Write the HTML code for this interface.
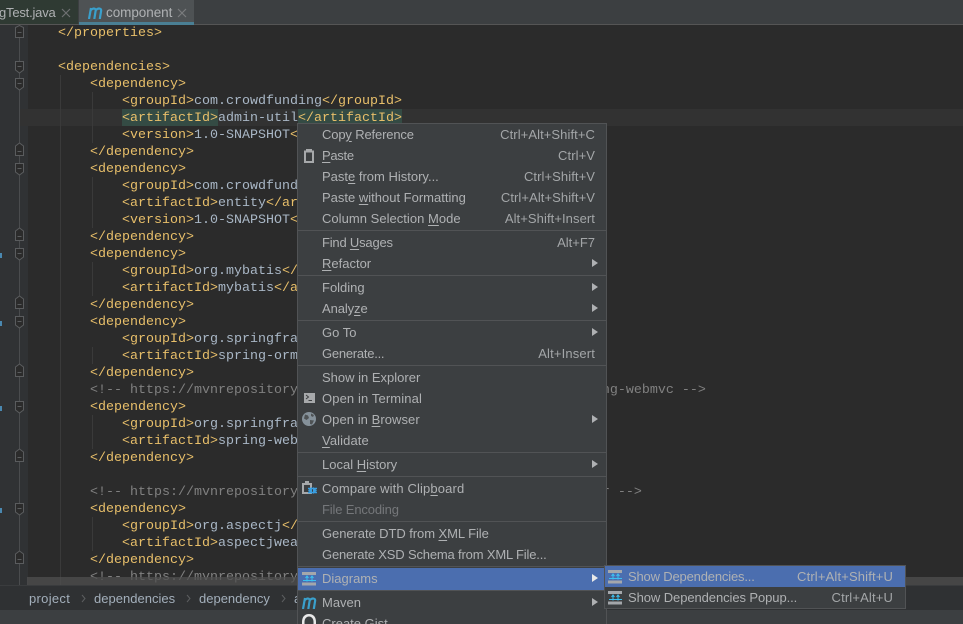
<!DOCTYPE html>
<html><head><meta charset="utf-8"><style>
html,body{margin:0;padding:0;width:963px;height:624px;overflow:hidden;background:#2b2b2b}
#r{position:relative;width:963px;height:624px;overflow:hidden;font-family:"Liberation Sans",sans-serif}
#r div,#r svg{position:absolute}
.c{font:13.33px/17px "Liberation Mono",monospace;color:#a9b7c6;white-space:pre;height:17px;margin-top:1px}
.c b{font-weight:normal;color:#e8bf6a}
.c i{font-style:normal;color:#808080}
.m{left:322px;height:21px;line-height:21px;font-size:13px;color:#afb1b3;white-space:pre}
.m u{text-underline-offset:2px}
.s{right:368px;height:21px;line-height:21px;font-size:13px;letter-spacing:.08px;color:#a3a6a8;white-space:pre}
.l{left:298px;width:309px;height:1px;background:#515355}
.a{left:592px;width:0;height:0;border-left:6px solid #afb1b3;border-top:4px solid transparent;border-bottom:4px solid transparent}
.g{left:92px;width:1px;background:#3a3a3a}
.b{top:586px;height:24px;line-height:25px;font-size:13px;color:#a3afbb}
</style></head><body><div id="r">
<div style="left:0;top:0;width:963px;height:24px;background:#3c3f41"></div>
<div style="left:0;top:24px;width:963px;height:1px;background:#555"></div>
<div style="left:0;top:0;width:78px;height:24px;background:#2f3a33"></div>
<div style="left:0;top:0;width:60px;height:24px;line-height:26px;font-size:13px;letter-spacing:-.2px;color:#afb1b3;white-space:pre;text-indent:-1px">gTest.java</div>
<svg style="left:60px;top:7px" width="12" height="12"><path d="M2 2L10 10M10 2L2 10" stroke="#6e7072" stroke-width="1.2"/></svg>
<div style="left:79px;top:0;width:115px;height:22px;background:#4e5254"></div>
<div style="left:79px;top:22px;width:115px;height:3px;background:#4a7f94"></div>
<svg style="left:88px;top:7px" width="15" height="12" fill="none" stroke="#3aa0cc" stroke-width="2.2"><path d="M1 12L3 1M3 3C5 1 8 .8 7.6 4L6.3 12M8 3C10 1 13.6 .8 13.1 4L11.8 12"/></svg>
<div style="left:106px;top:0;height:24px;line-height:26px;font-size:13.5px;letter-spacing:-.05px;color:#afb1b3">component</div>
<svg style="left:176px;top:7px" width="12" height="12"><path d="M2 2L10 10M10 2L2 10" stroke="#7a7c7e" stroke-width="1.2"/></svg>

<div style="left:0;top:25px;width:28px;height:561px;background:#303234"></div>
<div style="left:19px;top:25px;width:1px;height:561px;background:#4a4c4e"></div>
<div style="left:20px;top:109px;width:943px;height:17px;background:#323232"></div>
<div style="left:122px;top:109px;width:96px;height:17px;background:#344b44"></div>
<div style="left:298px;top:109px;width:104px;height:17px;background:#344b44"></div>
<div class="g" style="left:60px;top:75px;height:510px"></div>
<div class="g" style="top:92px;height:51px"></div>
<div class="g" style="top:177px;height:51px"></div>
<div class="g" style="top:262px;height:34px"></div>
<div class="g" style="top:347px;height:17px"></div>
<div class="g" style="top:415px;height:34px"></div>
<div class="g" style="top:517px;height:34px"></div>

<div class="c" style="left:58px;top:24px"><b>&lt;/properties&gt;</b></div>
<div class="c" style="left:58px;top:58px"><b>&lt;dependencies&gt;</b></div>
<div class="c" style="left:90px;top:75px"><b>&lt;dependency&gt;</b></div>
<div class="c" style="left:122px;top:92px"><b>&lt;groupId&gt;</b>com.crowdfunding<b>&lt;/groupId&gt;</b></div>
<div class="c" style="left:122px;top:109px"><b>&lt;artifactId&gt;</b>admin-util<b>&lt;/artifactId&gt;</b></div>
<div class="c" style="left:122px;top:126px"><b>&lt;version&gt;</b>1.0-SNAPSHOT<b>&lt;/version&gt;</b></div>
<div class="c" style="left:90px;top:143px"><b>&lt;/dependency&gt;</b></div>
<div class="c" style="left:90px;top:160px"><b>&lt;dependency&gt;</b></div>
<div class="c" style="left:122px;top:177px"><b>&lt;groupId&gt;</b>com.crowdfunding<b>&lt;/groupId&gt;</b></div>
<div class="c" style="left:122px;top:194px"><b>&lt;artifactId&gt;</b>entity<b>&lt;/artifactId&gt;</b></div>
<div class="c" style="left:122px;top:211px"><b>&lt;version&gt;</b>1.0-SNAPSHOT<b>&lt;/version&gt;</b></div>
<div class="c" style="left:90px;top:228px"><b>&lt;/dependency&gt;</b></div>
<div class="c" style="left:90px;top:245px"><b>&lt;dependency&gt;</b></div>
<div class="c" style="left:122px;top:262px"><b>&lt;groupId&gt;</b>org.mybatis<b>&lt;/groupId&gt;</b></div>
<div class="c" style="left:122px;top:279px"><b>&lt;artifactId&gt;</b>mybatis<b>&lt;/artifactId&gt;</b></div>
<div class="c" style="left:90px;top:296px"><b>&lt;/dependency&gt;</b></div>
<div class="c" style="left:90px;top:313px"><b>&lt;dependency&gt;</b></div>
<div class="c" style="left:122px;top:330px"><b>&lt;groupId&gt;</b>org.springframework<b>&lt;/groupId&gt;</b></div>
<div class="c" style="left:122px;top:347px"><b>&lt;artifactId&gt;</b>spring-orm<b>&lt;/artifactId&gt;</b></div>
<div class="c" style="left:90px;top:364px"><b>&lt;/dependency&gt;</b></div>
<div class="c" style="left:90px;top:381px"><i>&lt;!-- https://mvnrepository.com/artifact/org.springframework/spring-webmvc --&gt;</i></div>
<div class="c" style="left:90px;top:398px"><b>&lt;dependency&gt;</b></div>
<div class="c" style="left:122px;top:415px"><b>&lt;groupId&gt;</b>org.springframework<b>&lt;/groupId&gt;</b></div>
<div class="c" style="left:122px;top:432px"><b>&lt;artifactId&gt;</b>spring-webmvc<b>&lt;/artifactId&gt;</b></div>
<div class="c" style="left:90px;top:449px"><b>&lt;/dependency&gt;</b></div>
<div class="c" style="left:90px;top:483px"><i>&lt;!-- https://mvnrepository.com/artifact/org.aspectj/aspectjweaver --&gt;</i></div>
<div class="c" style="left:90px;top:500px"><b>&lt;dependency&gt;</b></div>
<div class="c" style="left:122px;top:517px"><b>&lt;groupId&gt;</b>org.aspectj<b>&lt;/groupId&gt;</b></div>
<div class="c" style="left:122px;top:534px"><b>&lt;artifactId&gt;</b>aspectjweaver<b>&lt;/artifactId&gt;</b></div>
<div class="c" style="left:90px;top:551px"><b>&lt;/dependency&gt;</b></div>
<div class="c" style="left:90px;top:568px"><i>&lt;!-- https://mvnrepository.com/artifact/org.aspectj/aspectjrt --&gt;</i></div>

<svg style="left:0;top:25px" width="28" height="561" fill="#2b2b2b" stroke="#5a5c5e">
<path d="M15.5 2.5L19.5 0.5L23.5 2.5V12.5H15.5Z M17.5 7.5H21.5"/>
<path d="M15.5 36.5H23.5V45L19.5 48L15.5 45Z M17.5 41.5H21.5"/>
<path d="M15.5 53.5H23.5V62L19.5 65L15.5 62Z M17.5 58.5H21.5"/>
<path d="M15.5 121L19.5 118L23.5 121V130.5H15.5Z M17.5 126.5H21.5"/>
<path d="M15.5 138.5H23.5V147L19.5 150L15.5 147Z M17.5 143.5H21.5"/>
<path d="M15.5 206L19.5 203L23.5 206V215.5H15.5Z M17.5 211.5H21.5"/>
<path d="M15.5 223.5H23.5V232L19.5 235L15.5 232Z M17.5 228.5H21.5"/>
<path d="M15.5 274L19.5 271L23.5 274V283.5H15.5Z M17.5 279.5H21.5"/>
<path d="M15.5 291.5H23.5V300L19.5 303L15.5 300Z M17.5 296.5H21.5"/>
<path d="M15.5 342L19.5 339L23.5 342V351.5H15.5Z M17.5 347.5H21.5"/>
<path d="M15.5 376.5H23.5V385L19.5 388L15.5 385Z M17.5 381.5H21.5"/>
<path d="M15.5 427L19.5 424L23.5 427V436.5H15.5Z M17.5 432.5H21.5"/>
<path d="M15.5 478.5H23.5V487L19.5 490L15.5 487Z M17.5 483.5H21.5"/>
<path d="M15.5 529L19.5 526L23.5 529V538.5H15.5Z M17.5 534.5H21.5"/>
</svg>
<div style="left:0;top:253px;width:2px;height:5px;background:#4a88b0"></div>
<div style="left:0;top:321px;width:2px;height:5px;background:#4a88b0"></div>
<div style="left:0;top:406px;width:2px;height:5px;background:#4a88b0"></div>
<div style="left:0;top:508px;width:2px;height:5px;background:#4a88b0"></div>

<div style="left:27px;top:577px;width:936px;height:8px;background:#505050;opacity:.75"></div>
<div style="left:0;top:586px;width:963px;height:24px;background:#2f3133"></div>
<div style="left:0;top:585px;width:963px;height:1px;background:#3a3c3e"></div>
<div style="left:0;top:610px;width:963px;height:14px;background:#3c3f41"></div>
<div class="b" style="left:29px;letter-spacing:.3px">project</div>
<div class="b" style="left:94px;letter-spacing:.02px">dependencies</div>
<div class="b" style="left:199px">dependency</div>
<div class="b" style="left:294px">a</div>
<svg style="left:0;top:586px" width="297" height="24" fill="none" stroke="#5c5e60"><path d="M82 9L85 12.5L82 16M187 9L190 12.5L187 16M282 9L285 12.5L282 16"/></svg>

<div style="left:297px;top:123px;width:310px;height:501px;background:#3c3f41;border-left:1px solid #515355;border-top:1px solid #515355;border-right:1px solid #515355;box-sizing:border-box"></div>
<div style="left:298px;top:568px;width:309px;height:22px;background:#4b6eaf"></div>

<div class="m" style="top:124px;letter-spacing:-.15px">Cop<u>y</u> Reference</div><div class="s" style="top:124px">Ctrl+Alt+Shift+C</div>
<div class="m" style="top:145px;letter-spacing:-.3px"><u>P</u>aste</div><div class="s" style="top:145px">Ctrl+V</div>
<div class="m" style="top:166px">Past<u>e</u> from History...</div><div class="s" style="top:166px">Ctrl+Shift+V</div>
<div class="m" style="top:187px">Paste <u>w</u>ithout Formatting</div><div class="s" style="top:187px">Ctrl+Alt+Shift+V</div>
<div class="m" style="top:208px;letter-spacing:.03px">Column Selection <u>M</u>ode</div><div class="s" style="top:208px">Alt+Shift+Insert</div>
<div class="l" style="top:230px"></div>
<div class="m" style="top:232px;letter-spacing:-.2px">Find <u>U</u>sages</div><div class="s" style="top:232px;letter-spacing:0">Alt+F7</div>
<div class="m" style="top:253px"><u>R</u>efactor</div><div class="a" style="top:259px"></div>
<div class="l" style="top:275px"></div>
<div class="m" style="top:277px">Folding</div><div class="a" style="top:283px"></div>
<div class="m" style="top:298px;letter-spacing:-.1px">Analy<u>z</u>e</div><div class="a" style="top:304px"></div>
<div class="l" style="top:320px"></div>
<div class="m" style="top:322px">Go To</div><div class="a" style="top:328px"></div>
<div class="m" style="top:343px;letter-spacing:-.25px">Generate...</div><div class="s" style="top:343px;letter-spacing:.15px">Alt+Insert</div>
<div class="l" style="top:365px"></div>
<div class="m" style="top:367px">Show in Explorer</div>
<div class="m" style="top:388px;letter-spacing:.12px">Open in Terminal</div>
<div class="m" style="top:409px;letter-spacing:.06px">Open in <u>B</u>rowser</div><div class="a" style="top:415px"></div>
<div class="m" style="top:430px;letter-spacing:.1px"><u>V</u>alidate</div>
<div class="l" style="top:452px"></div>
<div class="m" style="top:454px">Local <u>H</u>istory</div><div class="a" style="top:460px"></div>
<div class="l" style="top:476px"></div>
<div class="m" style="top:478px;letter-spacing:.13px">Compare with Clip<u>b</u>oard</div>
<div class="m" style="top:499px;letter-spacing:-.15px;color:#75777a">File Encoding</div>
<div class="l" style="top:521px"></div>
<div class="m" style="top:523px;letter-spacing:-.07px">Generate DTD from <u>X</u>ML File</div>
<div class="m" style="top:544px;letter-spacing:-.17px">Generate XSD Schema from XML File...</div>
<div class="l" style="top:566px"></div>
<div class="m" style="top:568px">Diagrams</div><div class="a" style="top:574px;border-left-color:#e8e8e8"></div>
<div class="l" style="top:590px"></div>
<div class="m" style="top:592px">Maven</div><div class="a" style="top:598px"></div>
<div class="m" style="top:613px">Create Gist...</div>

<svg style="left:304px;top:149px" width="10" height="14"><path d="M0 1.5H2V0H8V1.5H10V14H0Z" fill="#a7a9ab"/><path d="M2 3.5H8V12H2Z" fill="#3c3f41"/></svg>
<svg style="left:304px;top:393px" width="11" height="11"><rect width="11" height="10" fill="#a7a9ab"/><path d="M2 2L4.5 4L2 6M4.5 7.5H8" stroke="#3c3f41" fill="none"/></svg>
<svg style="left:302px;top:412px" width="15" height="15"><circle cx="7" cy="7" r="7" fill="#85919a"/><path d="M3 2.5L6 3.5L7 6L4.5 8L2 6.5ZM8 8L12 8.5L10 12.5L8 12Z M9 1.5L12 3L11 5L9 4Z" fill="#4e5254"/></svg>
<svg style="left:302px;top:481px" width="16" height="16"><path d="M0 2H3V0H7V2H10V13H0Z" fill="#a7a9ab"/><path d="M2 4H8V11H2Z" fill="#3c3f41"/><path d="M6 7.5H15M6 11.5H15" stroke="#3a9ee0" stroke-width="1.5"/><path d="M6 9.5L10 6V13ZM15 9.5L11 6V13Z" fill="#3a9ee0"/></svg>
<svg style="left:302px;top:572px" width="15" height="14"><path d="M0 0H14V3H0ZM0 10.5H14V13.5H0Z" fill="#a4a7ab"/><path d="M5 9.5V5M3.5 6L5 4L6.5 6M10 9.5V5M8.5 6L10 4L11.5 6M1 8.5H14" fill="none" stroke="#3cc0f0"/></svg>
<svg style="left:302px;top:597px" width="15" height="12" fill="none" stroke="#3aa0cc" stroke-width="2.2"><path d="M1 12L3 1M3 3C5 1 8 .8 7.6 4L6.3 12M8 3C10 1 13.6 .8 13.1 4L11.8 12"/></svg>
<svg style="left:301px;top:614px" width="16" height="10"><path d="M8 0C3.6 0 1 3 1 8V10H15V8C15 3 12.4 0 8 0Z" fill="#e8e8e8"/><path d="M8 2.5C5.5 2.5 3.5 4.5 3.5 8V10H12.5V8C12.5 4.5 10.5 2.5 8 2.5Z" fill="#3c3f41"/></svg>

<div style="left:604px;top:565px;width:302px;height:44px;background:#3c3f41;border:1px solid #515355;box-sizing:border-box"></div>
<div style="left:605px;top:566px;width:300px;height:21px;background:#4b6eaf"></div>
<div class="m" style="left:628px;top:566px;letter-spacing:-.17px">Show Dependencies...</div><div class="s" style="right:70px;top:566px;letter-spacing:.15px;color:#afb1b3">Ctrl+Alt+Shift+U</div>
<div class="m" style="left:628px;top:587px;letter-spacing:-.08px">Show Dependencies Popup...</div><div class="s" style="right:70px;top:587px;letter-spacing:.15px">Ctrl+Alt+U</div>
<svg style="left:608px;top:570px" width="15" height="14"><path d="M0 0H14V3H0ZM0 10.5H14V13.5H0Z" fill="#a4a7ab"/><path d="M5 9.5V5M3.5 6L5 4L6.5 6M10 9.5V5M8.5 6L10 4L11.5 6M1 8.5H14" fill="none" stroke="#3cc0f0"/></svg>
<svg style="left:608px;top:591px" width="15" height="14"><path d="M0 0H14V3H0ZM0 10.5H14V13.5H0Z" fill="#a4a7ab"/><path d="M5 9.5V5M3.5 6L5 4L6.5 6M10 9.5V5M8.5 6L10 4L11.5 6M1 8.5H14" fill="none" stroke="#3cc0f0"/></svg>
</div></body></html>
